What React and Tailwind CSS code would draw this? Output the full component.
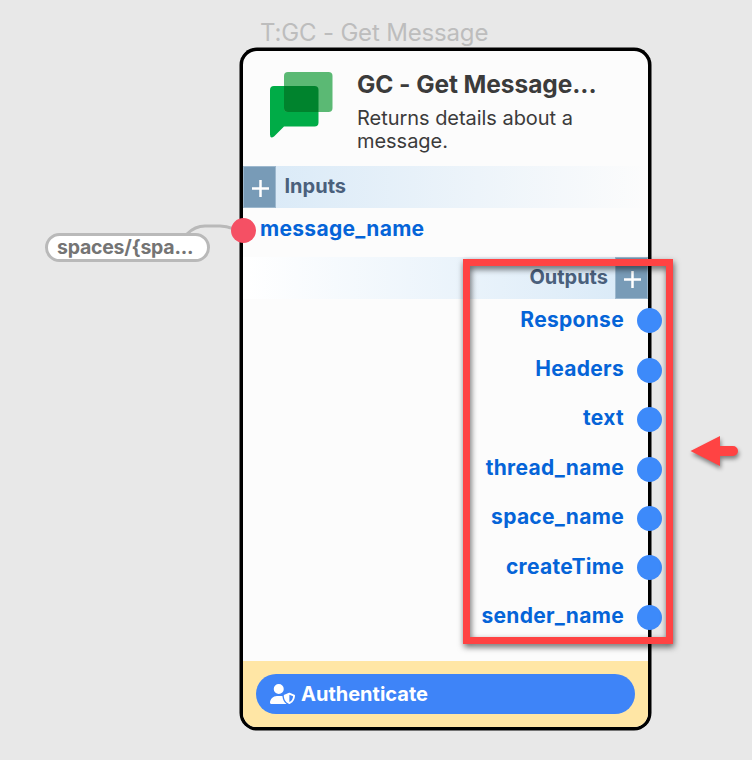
import { FaUserShield } from "react-icons/fa6";

const outputs = ["Response", "Headers", "text", "thread_name", "space_name", "createTime", "sender_name"];

function Plus() {
  return (
    <svg className="ml-[1px] mt-[3px] h-[17px] w-[17px]" viewBox="0 0 17 17" stroke="white" strokeWidth="2.5">
      <path d="M8.500 0v17M0 8.500h17" />
    </svg>
  );
}

function ChatLogo() {
  return (
    <svg className="h-[66px] w-[63px] shrink-0" viewBox="0 0 63 66">
      <path
        d="M4 14H44Q48.500 14 48.500 18V50.500Q48.500 54.500 44.500 54.500H14L4 64.500Q0 67 0 62.500V18Q0 14 4 14Z"
        fill="#00ac47"
      />
      <rect x="14" y="0" width="48.500" height="40" rx="4" fill="#5bb974" />
      <path d="M14 14H44.500Q48.500 14 48.500 18V40H18Q14 40 14 36Z" fill="#00832d" />
    </svg>
  );
}

function Node() {
  return (
    <section className="absolute left-[240px] top-[48px] flex h-[682px] w-[411px] flex-col rounded-[17px] border-[3px] border-black bg-[#fcfcfc] shadow-[0_0_0_0.5px_black]">
      <header className="flex h-[115px] shrink-0 pl-[27px] pt-[21px]">
        <ChatLogo />
        <div className="-mt-[4px] ml-[24px] text-[#3b3b3b]">
          <h1 className="whitespace-nowrap text-[24.5px] font-bold leading-[32px] tracking-[-0.08px]">GC - Get Message...</h1>
          <p className="mt-[7px] whitespace-nowrap text-[20px] leading-[23px] tracking-[-0.04px]">
            Returns details about a<br />message.
          </p>
        </div>
      </header>
      <div className="flex h-[42px] shrink-0 bg-gradient-to-r from-[#d8e9f7] to-[#fcfcfc]">
        <div className="flex w-[33px] items-center justify-center border border-[#9db8ce] bg-[#789bb7]">
          <Plus />
        </div>
        <span className="ml-[8.500px] text-[20px] font-bold leading-[40px] text-[#4a607c]">Inputs</span>
      </div>
      <div className="flex h-[49px] shrink-0 items-start">
        <span className="-ml-[12px] mt-[9.500px] h-[25px] w-[25px] rounded-full bg-[#f55064]" />
        <span className="ml-[4px] text-[21px] font-bold leading-[42px] tracking-[0.3px] text-[#0564d8]">message_name</span>
      </div>
      <div className="flex h-[42px] shrink-0 justify-end bg-gradient-to-l from-[#d8e9f7] to-white">
        <span className="mr-[7px] text-[20px] font-bold leading-[40px] text-[#4a607c]">Outputs</span>
        <div className="flex w-[33px] items-center justify-center border border-[#9db8ce] bg-[#789bb7]">
          <Plus />
        </div>
      </div>
      <ul className="-mt-[3px] flex-1">
        {outputs.map((name) => (
          <li key={name} className="-mr-[13.500px] flex h-[49.4px] items-center justify-end">
            <span className="-mt-[2px] text-[21px] font-bold leading-[30px] tracking-[0.3px] text-[#0564d8]">{name}</span>
            <span className="ml-[12.500px] mt-[0.5px] h-[25px] w-[25px] rounded-full bg-[#3d8afa]" />
          </li>
        ))}
      </ul>
      <footer className="h-[66px] shrink-0 rounded-b-[14px] bg-[#ffe6a5] px-[13px] pt-[13px]">
        <button className="flex h-[40px] w-full items-center rounded-full bg-[#3e84f8] pl-[14px] text-[20px] font-bold text-white">
          <FaUserShield className="h-[20px] w-[25px]" />
          <span className="ml-[6px]">Authenticate</span>
        </button>
      </footer>
    </section>
  );
}

export default function App() {
  return (
    <main className="relative h-[760px] w-[752px] overflow-hidden bg-[#e8e8e8] font-['Inter',sans-serif]">
      <div className="absolute left-[260px] top-[18px] whitespace-nowrap text-[24px] font-normal leading-[30px] tracking-[-0.17px] text-[#bdbdbd]">T:GC - Get Message</div>
      <svg className="absolute left-[180px] top-[215px] h-[30px] w-[60px]" viewBox="0 0 60 30" fill="none" stroke="#b9b9b9" strokeWidth="3">
        <path d="M7 19C13 13 18 11 25 11H40C47 11 49 12 54 14" />
      </svg>
      <div className="absolute left-[44.500px] top-[232.500px] flex h-[29.500px] w-[165px] items-center rounded-full border-[3px] border-[#b9b9b9] bg-white pl-[9.500px] text-[19.5px] font-bold tracking-[-0.25px] text-[#747474]">
        <span>{"spaces/{spa..."}</span>
      </div>
      <Node />
      <div className="absolute left-[463px] top-[259px] h-[385px] w-[210px] border-[7px] border-[#ff4343] drop-shadow-[1px_3px_3px_rgba(0,0,0,0.6)]" />
      <svg className="absolute left-[688px] top-[432px] h-[40px] w-[54px] overflow-visible drop-shadow-[1px_3px_2px_rgba(0,0,0,0.45)]" viewBox="0 0 54 40" fill="#ff4343">
        <path d="M2.500 19L32 4V14H45a5 5 0 0 1 0 10H32V34Z" />
      </svg>
    </main>
  );
}
